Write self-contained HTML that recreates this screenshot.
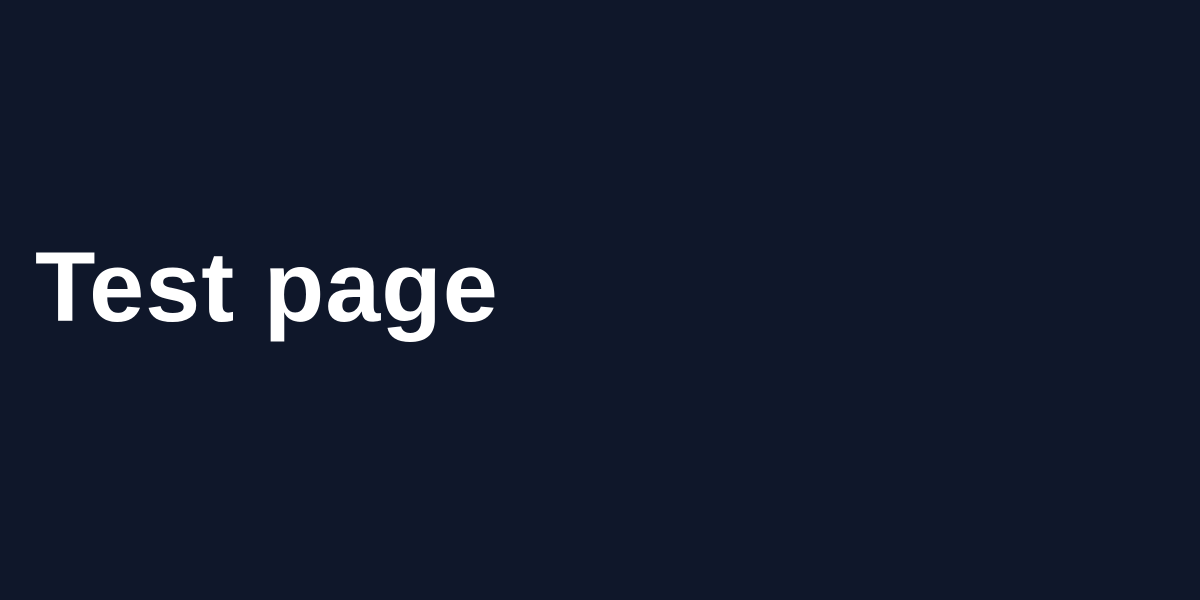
<!DOCTYPE html>
<html><head><style>
html,body{margin:0;padding:0;width:1200px;height:600px;background:#0f172a;overflow:hidden}
h1{position:absolute;left:35px;top:237px;margin:0;font-family:"Liberation Sans",sans-serif;font-weight:700;font-size:99px;line-height:100px;color:#fff;letter-spacing:1px}
</style></head><body><h1>Test page</h1></body></html>
